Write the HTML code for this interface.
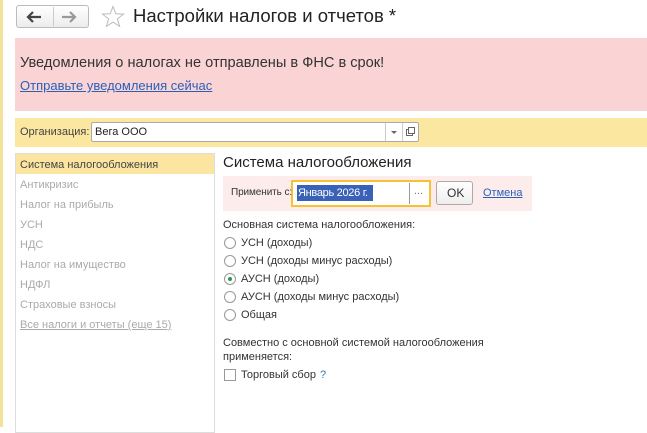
<!DOCTYPE html>
<html><head><meta charset="utf-8"><style>
*{margin:0;padding:0;box-sizing:border-box}
body{width:647px;height:427px;overflow:hidden;background:#fff;font-family:"Liberation Sans",Arial,sans-serif;font-size:11px;color:#333;position:relative}
.a{position:absolute;white-space:nowrap}
.radio{position:absolute;width:12px;height:12px;border:1px solid #999;border-radius:50%;background:#fff}
.rl{position:absolute;font-size:11px;color:#333;white-space:nowrap}
.nav{color:#aaa}
</style></head><body>
<div class="a" style="left:0;top:0;width:3px;height:427px;background:#f3e39a"></div>
<div class="a" style="left:16px;top:5px;width:73px;height:23px;border:1px solid #bbb;border-radius:3px;background:linear-gradient(#fff,#ececec)"></div>
<div class="a" style="left:53px;top:7px;width:1px;height:19px;background:#ccc"></div>
<svg class="a" style="left:26px;top:10px" width="18" height="14"><path d="M2 7H15M7 2L2 7L7 12" stroke="#444" stroke-width="2.2" fill="none"/></svg>
<svg class="a" style="left:60px;top:10px" width="18" height="14"><path d="M2 7H15M10 2L15 7L10 12" stroke="#999" stroke-width="2.2" fill="none"/></svg>
<svg class="a" style="left:101px;top:5px" width="24" height="23"><path d="M12 1.5L14.8 8.8L22.5 9.1L16.4 13.9L18.6 21.4L12 17.1L5.4 21.4L7.6 13.9L1.5 9.1L9.2 8.8Z" fill="none" stroke="#bbb" stroke-width="1"/></svg>
<div class="a" style="left:133px;top:5px;font-size:18.5px;color:#222">Настройки налогов и отчетов *</div>
<div class="a" style="left:15px;top:38px;width:632px;height:73px;background:#fad4d4"></div>
<div class="a" style="left:20px;top:55px;font-size:14.6px;color:#333">Уведомления о налогах не отправлены в ФНС в срок!</div>
<div class="a" style="left:20px;top:78px;font-size:13px;color:#2a5fb8;text-decoration:underline">Отправьте уведомления сейчас</div>
<div class="a" style="left:15px;top:118px;width:632px;height:29px;background:#fbe79f"></div>
<div class="a" style="left:20px;top:126px;font-size:11px;color:#444">Организация:</div>
<div class="a" style="left:91px;top:122px;width:328px;height:20px;border:1px solid #aaa;border-radius:2px;background:#fff"></div>
<div class="a" style="left:95px;top:126px;font-size:11px;color:#222">Вега ООО</div>
<div class="a" style="left:385px;top:123px;width:1px;height:18px;background:#ccc"></div>
<div class="a" style="left:402px;top:123px;width:1px;height:18px;background:#ccc"></div>
<div class="a" style="left:391px;top:131px;width:0;height:0;border-left:3px solid transparent;border-right:3px solid transparent;border-top:3px solid #666"></div>
<svg class="a" style="left:405px;top:126px" width="11" height="11"><rect x="1.5" y="3.5" width="6" height="6" fill="#fff" stroke="#666"/><rect x="3.5" y="1.5" width="6" height="6" fill="#fff" stroke="#666"/></svg>
<div class="a" style="left:15px;top:153px;width:200px;height:280px;border:1px solid #ddd"></div>
<div class="a" style="left:16px;top:154px;width:198px;height:20px;background:#fbe5a0"></div>
<div class="a" style="left:20px;top:159px;color:#444">Система налогообложения</div>
<div class="a nav" style="left:20px;top:179px">Антикризис</div>
<div class="a nav" style="left:20px;top:199px">Налог на прибыль</div>
<div class="a nav" style="left:20px;top:219px">УСН</div>
<div class="a nav" style="left:20px;top:239px">НДС</div>
<div class="a nav" style="left:20px;top:259px">Налог на имущество</div>
<div class="a nav" style="left:20px;top:279px">НДФЛ</div>
<div class="a nav" style="left:20px;top:299px">Страховые взносы</div>
<div class="a nav" style="left:20px;top:319px;text-decoration:underline">Все налоги и отчеты (еще 15)</div>
<div class="a" style="left:223px;top:154px;font-size:15px;color:#222">Система налогообложения</div>
<div class="a" style="left:223px;top:176px;width:309px;height:35px;background:#fcecec"></div>
<div class="a" style="left:291px;top:180px;width:140px;height:27px;border:2px solid #f6c132;background:#fff"></div>
<div class="a" style="left:231px;top:187px;color:#333;font-size:10px;letter-spacing:-0.1px">Применить с:</div>
<div class="a" style="left:297px;top:185px;height:16px;width:76px;background:#3a61b8"></div>
<div class="a" style="left:298px;top:187px;font-size:11px;letter-spacing:-0.3px;color:#fff">Январь 2026 г.</div>
<div class="a" style="left:409px;top:183px;width:1px;height:21px;background:#999"></div>
<div class="a" style="left:414px;top:185px;color:#777">...</div>
<div class="a" style="left:436px;top:181px;width:37px;height:24px;border:1px solid #aaa;border-radius:3px;background:linear-gradient(#fff,#eee)"></div>
<div class="a" style="left:447px;top:186px;font-size:12px;color:#333">OK</div>
<div class="a" style="left:483px;top:187px;color:#2a5fb8;text-decoration:underline">Отмена</div>
<div class="a" style="left:223px;top:219px;color:#333">Основная система налогообложения:</div>
<div class="radio" style="left:224px;top:237px"></div><div class="rl" style="left:241px;top:237px">УСН (доходы)</div>
<div class="radio" style="left:224px;top:255px"></div><div class="rl" style="left:241px;top:255px">УСН (доходы минус расходы)</div>
<div class="radio" style="left:224px;top:273px"></div><div class="a" style="left:228px;top:277px;width:4px;height:4px;border-radius:50%;background:#2a9a4a"></div><div class="rl" style="left:241px;top:273px">АУСН (доходы)</div>
<div class="radio" style="left:224px;top:291px"></div><div class="rl" style="left:241px;top:291px">АУСН (доходы минус расходы)</div>
<div class="radio" style="left:224px;top:309px"></div><div class="rl" style="left:241px;top:309px">Общая</div>
<div class="a" style="left:223px;top:337px;color:#333">Совместно с основной системой налогообложения</div>
<div class="a" style="left:223px;top:351px;color:#333">применяется:</div>
<div class="a" style="left:224px;top:369px;width:12px;height:12px;border:1px solid #999;background:#fff"></div>
<div class="rl" style="left:241px;top:369px">Торговый сбор</div>
<div class="a" style="left:320px;top:369px;color:#2a7ac0">?</div>
</body></html>
